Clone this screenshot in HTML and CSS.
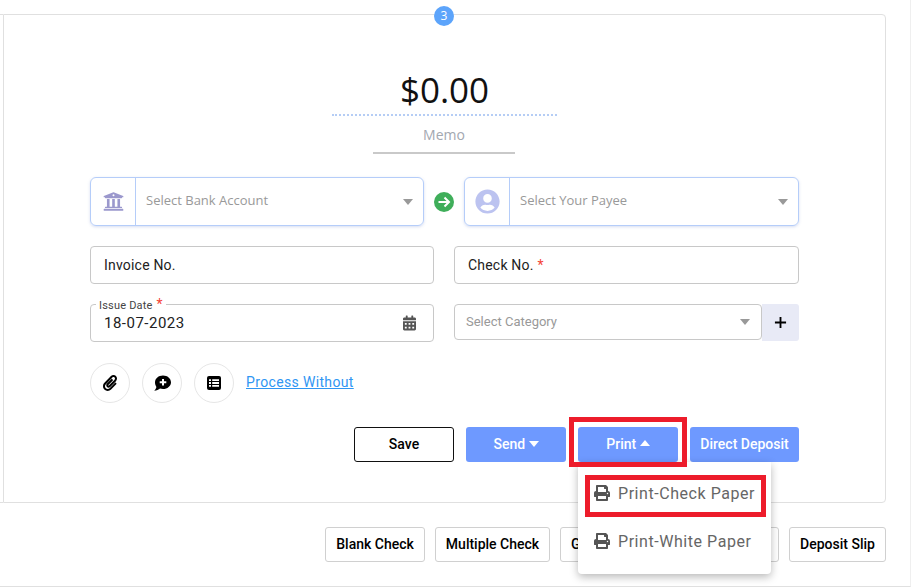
FILE: index.html
```html
<!DOCTYPE html>
<html lang="en">
<head>
  <meta charset="UTF-8" />
  <title>Write Check</title>
  <link rel="stylesheet" href="styles.css">
</head>
<body>

<div class="page">
  <div class="card">
    <span class="step">3</span>

    <div class="amount">$0.00</div>
    <div class="memo">Memo</div>

    <div class="form">
      <div class="row pick-row">
        <div class="pick">
          <span class="pick-icon">
            <svg class="i-bank" viewBox="0 0 512 512"><path d="M496 128v16a8 8 0 0 1-8 8h-24v12c0 6.627-5.373 12-12 12H60c-6.627 0-12-5.373-12-12v-12H24a8 8 0 0 1-8-8v-16a8 8 0 0 1 4.941-7.392l232-88a7.996 7.996 0 0 1 6.118 0l232 88A8 8 0 0 1 496 128zm-24 304H40c-13.255 0-24 10.745-24 24v16a8 8 0 0 0 8 8h464a8 8 0 0 0 8-8v-16c0-13.255-10.745-24-24-24zM96 192v192H60c-6.627 0-12 5.373-12 12v20h416v-20c0-6.627-5.373-12-12-12h-36V192h-64v192h-64V192h-64v192h-64V192H96z"/><circle cx="256" cy="104" r="24" fill="#fff"/></svg>
          </span>
          <span class="pick-text">Select Bank Account</span>
          <span class="caret"></span>
        </div>
        <span class="go">
          <svg viewBox="0 0 20 20"><path d="M4.500 10h10.500M10.500 5.500L15 10l-4.500 4.500" fill="none" stroke="#fff" stroke-width="2"/></svg>
        </span>
        <div class="pick">
          <span class="pick-icon">
            <svg class="i-user" viewBox="0 0 496 512"><path d="M248 8C111 8 0 119 0 256s111 248 248 248 248-111 248-248S385 8 248 8zm0 96c48.600 0 88 39.400 88 88s-39.400 88-88 88-88-39.400-88-88 39.400-88 88-88zm0 344c-58.700 0-111.300-26.600-146.500-68.200 18.800-35.400 55.600-59.800 98.500-59.800 2.400 0 4.800.4 7.100 1.100 13 4.200 26.600 6.900 40.900 6.900 14.300 0 28-2.700 40.900-6.900 2.300-.7 4.700-1.100 7.100-1.100 42.900 0 79.700 24.400 98.500 59.800C359.300 421.400 306.700 448 248 448z"/></svg>
          </span>
          <span class="pick-text">Select Your Payee</span>
          <span class="caret"></span>
        </div>
      </div>

      <div class="row two">
        <div class="field">Invoice No.</div>
        <div class="field">Check No. <span class="req">*</span></div>
      </div>

      <div class="row two">
        <div class="field date">
          <span class="legend">Issue Date <span class="req">*</span></span>
          <span>18-07-2023</span>
          <svg class="i-cal" viewBox="0 0 448 512"><path d="M0 464c0 26.500 21.500 48 48 48h352c26.500 0 48-21.500 48-48V192H0v272zm320-196c0-6.600 5.400-12 12-12h40c6.600 0 12 5.400 12 12v40c0 6.600-5.400 12-12 12h-40c-6.600 0-12-5.400-12-12v-40zm0 128c0-6.600 5.400-12 12-12h40c6.600 0 12 5.400 12 12v40c0 6.600-5.400 12-12 12h-40c-6.600 0-12-5.400-12-12v-40zM192 268c0-6.600 5.400-12 12-12h40c6.600 0 12 5.400 12 12v40c0 6.600-5.400 12-12 12h-40c-6.600 0-12-5.400-12-12v-40zm0 128c0-6.600 5.400-12 12-12h40c6.600 0 12 5.400 12 12v40c0 6.600-5.400 12-12 12h-40c-6.600 0-12-5.400-12-12v-40zM64 268c0-6.600 5.400-12 12-12h40c6.600 0 12 5.400 12 12v40c0 6.600-5.400 12-12 12H76c-6.600 0-12-5.400-12-12v-40zm0 128c0-6.600 5.400-12 12-12h40c6.600 0 12 5.400 12 12v40c0 6.600-5.400 12-12 12H76c-6.600 0-12-5.400-12-12v-40zM400 64h-48V16c0-8.800-7.200-16-16-16h-32c-8.800 0-16 7.200-16 16v48H160V16c0-8.800-7.200-16-16-16h-32c-8.800 0-16 7.200-16 16v48H48C21.500 64 0 85.500 0 112v48h448v-48c0-26.500-21.500-48-48-48z"/></svg>
        </div>
        <div class="cat-wrap">
          <div class="cat">
            <span class="cat-text">Select Category</span>
            <span class="caret"></span>
          </div>
          <span class="plus">
            <svg viewBox="0 0 14 14"><path d="M1 7h12M7 1v12" stroke="#000" stroke-width="2"/></svg>
          </span>
        </div>
      </div>

      <div class="tools">
        <span class="round">
          <svg class="i-clip" viewBox="0 0 448 512"><path d="M43.246 466.142c-58.430-60.289-57.341-157.511 1.386-217.581L254.392 34c44.316-45.332 116.351-45.336 160.671 0 43.890 44.894 43.943 117.329 0 162.276L232.214 383.128c-29.855 30.537-78.633 30.111-107.982-.998-28.275-29.970-27.368-77.473 1.452-106.953l143.743-146.835c6.182-6.314 16.312-6.422 22.626-.241l22.861 22.379c6.315 6.182 6.422 16.312.241 22.626L171.427 319.927c-4.932 5.045-5.236 13.428-.648 18.292 4.372 4.634 11.245 4.711 15.688.165l182.849-186.851c19.613-20.062 19.613-52.725-.011-72.798-19.189-19.627-49.957-19.637-69.154 0L90.390 293.295c-34.763 35.560-35.299 93.120-1.191 128.313 34.010 35.093 88.985 35.137 123.058.286l172.060-175.999c6.177-6.319 16.307-6.433 22.626-.256l22.877 22.364c6.319 6.177 6.434 16.307.256 22.626l-172.060 175.998c-59.576 60.938-155.943 60.216-214.770-.485z"/></svg>
        </span>
        <span class="round">
          <svg class="i-note" viewBox="0 0 18 16"><path d="M10 0.500c4.400 0 8 2.900 8 6.800s-3.600 6.800-8 6.800c-1.100 0-2.100-.2-3-.5C5.700 14.800 3.600 15.800 1.200 15.800c1-1 2-2.600 2.200-3.900C2.500 10.700 2 9 2 7.300 2 3.400 5.600.5 10 .5z"/><path d="M10 4v6.600M6.700 7.300h6.600" stroke="#fff" stroke-width="2"/></svg>
        </span>
        <span class="round">
          <svg class="i-list" viewBox="0 0 14 14"><rect width="14" height="14" rx="2"/><path d="M2 3.300h2v1.800H2zM2 6.100h2v1.800H2zM2 8.900h2v1.800H2zM5.200 3.300H12v1.800H5.200zM5.200 6.100H12v1.800H5.200zM5.200 8.900H12v1.800H5.200z" fill="#fff"/></svg>
        </span>
        <a class="link" href="#">Process Without</a>
      </div>

      <div class="actions">
        <button class="btn save">Save</button>
        <button class="btn blue">Send <span class="caret down"></span></button>
        <div class="print-wrap">
          <button class="btn blue">Print <span class="caret up"></span></button>
          <span class="mark mark-btn"></span>
          <div class="menu">
            <div class="menu-item">
              <svg class="i-print" viewBox="0 0 512 512"><use href="#print"/></svg>
              Print-Check Paper
            </div>
            <div class="menu-item">
              <svg class="i-print" viewBox="0 0 512 512"><use href="#print"/></svg>
              Print-White Paper
            </div>
            <span class="mark mark-item"></span>
          </div>
        </div>
        <button class="btn blue deposit">Direct Deposit</button>
      </div>
    </div>
  </div>

  <div class="foot">
    <button class="btn plain w-blank">Blank Check</button>
    <button class="btn plain w-multi">Multiple Check</button>
    <button class="btn plain w-group">G</button>
    <button class="btn plain w-slip">Deposit Slip</button>
  </div>
</div>

<svg class="defs" width="0" height="0">
  <symbol id="print" viewBox="0 0 512 512"><path d="M448 192V77.250c0-8.490-3.370-16.620-9.370-22.630L393.370 9.370c-6-6-14.140-9.370-22.630-9.370H96C78.330 0 64 14.330 64 32v160c-35.350 0-64 28.650-64 64v112c0 8.840 7.160 16 16 16h48v96c0 17.670 14.330 32 32 32h320c17.670 0 32-14.330 32-32v-96h48c8.840 0 16-7.160 16-16V256c0-35.350-28.650-64-64-64zm-64 256H128v-96h256v96zm0-224H128V64h192v48c0 8.840 7.160 16 16 16h48v96zm48 72c-13.250 0-24-10.750-24-24 0-13.260 10.750-24 24-24s24 10.740 24 24c0 13.250-10.750 24-24 24z"/></symbol>
</svg>

</body>
</html>
```

FILE: styles.css
```css
* { box-sizing: border-box; }
html, body { margin: 0; height: 100%; overflow: hidden; background: #fff; }
body { font-family: 'Roboto', sans-serif; color: #212529; }

.page { width: 911px; height: 587px; padding-top: 14px; border-right: 1px solid #efefef; border-bottom: 1px solid #e0e0e0; }
.card { position: relative; width: 883px; height: 489px; margin-left: 3px; padding-top: 56px; border: 1px solid #e0e0e0; border-left-color: #e0e0e0; border-radius: 0 4px 4px 0; }
.card::before, .card::after { content: ""; position: absolute; left: -4px; width: 3px; height: 1px; background: #e0e0e0; }
.card::before { top: -1px; }
.card::after { bottom: -1px; }
.step { position: absolute; top: -9px; left: 430px; width: 20px; height: 20px; border-radius: 50%; background: #5ca4fb; color: #fff; font-family: 'Open Sans', sans-serif; font-size: 12px; line-height: 20px; text-align: center; }

.amount { width: 225px; height: 45px; margin: 0 auto; border-bottom: 2px dotted #b5cdf5; font-family: 'Open Sans', sans-serif; font-size: 35px; font-weight: 500; line-height: 38px; color: #111; text-align: center; }
.memo { width: 142px; height: 38px; margin: 0 0 0 369px; border-bottom: 2px solid #c9c9c9; font-family: 'Open Sans', sans-serif; font-size: 14px; line-height: 38px; color: #a3a8b0; text-align: center; }

.form { width: 709px; margin: 23px auto 0; }
.row { display: flex; }
.two { display: grid; grid-template-columns: 344px 345px; gap: 20px; margin-top: 20px; }

.pick-row { align-items: center; gap: 10px; }
.pick { flex: 1 1 0; display: flex; align-items: center; height: 49px; border: 1px solid #b5cdf9; border-radius: 6px; box-shadow: 0 1px 3px rgba(90,120,200,.25); }
.pick:first-child { flex: 0 0 334px; }
.pick-icon { display: flex; align-items: center; justify-content: center; flex: none; width: 45px; height: 100%; border-right: 1px solid #b5cdf9; }
.pick-text { flex: 1; padding: 0 0 3px 10px; font-family: 'Open Sans', sans-serif; font-size: 13px; color: #999; }
.pick .caret { margin-right: 10px; }
.i-bank { width: 21px; height: 21px; fill: #9b98cd; }
.i-user { width: 25px; height: 25px; fill: #bcc3f0; }
.go { flex: none; width: 20px; height: 20px; border-radius: 50%; background: #3fae5a; }
.go svg { display: block; }

.caret { display: inline-block; width: 0; height: 0; border-left: 5px solid transparent; border-right: 5px solid transparent; border-top: 6px solid #999; }
.caret.down { border-top-color: #fff; vertical-align: 2px; }
.caret.up { border-top: 0; border-bottom: 6px solid #fff; vertical-align: 3px; }

.field { display: flex; align-items: center; height: 38px; padding: 0 13px; border: 1px solid #c8c8c8; border-radius: 4px; font-size: 14px; letter-spacing: .2px; color: #222; }
.req { color: #f44336; }
.field .req { margin-left: 4px; }
.date { position: relative; justify-content: space-between; padding-right: 17px; font-size: 15px; letter-spacing: .5px; }
.legend { position: absolute; top: -7px; left: 5px; padding: 0 3px; background: #fff; font-size: 11px; line-height: 13px; letter-spacing: .2px; color: #444; }
.legend .req { margin-left: 1px; font-size: 14px; }
.i-cal { width: 13px; height: 16px; fill: #555; }

.cat-wrap { display: flex; align-items: flex-start; }
.cat { flex: 1; display: flex; align-items: center; justify-content: space-between; height: 36px; padding: 0 11px; border: 1px solid #c8c8c8; border-radius: 4px; font-size: 13px; color: #999; }
.cat-text { padding-bottom: 2px; }
.plus { display: flex; align-items: center; justify-content: center; flex: none; width: 37px; height: 37px; background: #e8eaf6; border-radius: 0 3px 3px 0; }
.plus svg { width: 13px; height: 13px; }

.tools { display: flex; align-items: center; gap: 12px; margin-top: 21px; }
.round { display: flex; align-items: center; justify-content: center; width: 40px; height: 40px; border: 1px solid #e6e6e6; border-radius: 50%; }
.i-clip { width: 14px; height: 16px; }
.i-note { width: 18px; height: 16px; }
.i-list { width: 14px; height: 14px; }
.link { padding-bottom: 2px; color: #2f96f3; font-size: 14px; letter-spacing: .35px; }

.actions { display: flex; justify-content: flex-end; gap: 12px; margin-top: 24px; }
.btn { height: 35px; padding: 0 0 2px; border: 1px solid transparent; border-radius: 3px; background: #fff; font-family: inherit; font-size: 14px; font-weight: 500; color: #000; white-space: nowrap; }
.save { width: 100px; border-color: #111; }
.blue { width: 100px; background: #6e99ff; color: #fff; }
.deposit { width: 109px; }
.print-wrap { position: relative; }

.menu { position: absolute; z-index: 2; top: 35px; left: 0; width: 193px; height: 112px; padding-top: 7px; background: #fff; border-radius: 0 0 4px 4px; box-shadow: 0 3px 8px rgba(0,0,0,.28); }
.menu-item { display: flex; align-items: center; gap: 8px; height: 48px; padding-left: 16px; font-size: 16px; letter-spacing: .55px; color: #666; }
.i-print { width: 16px; height: 16px; fill: #555; }
.defs { position: absolute; }

.mark { position: absolute; z-index: 3; border: 5px solid #ed1c2b; pointer-events: none; }
.mark-btn { top: -10px; left: -9px; width: 118px; height: 50px; }
.mark-item { top: 13px; left: 7px; width: 181px; height: 42px; }

.foot { display: flex; justify-content: flex-end; gap: 10px; width: 886px; margin-top: 24px; }
.plain { border-color: #d0d0d0; }
.w-blank { width: 100px; }
.w-multi { width: 115px; }
.w-group { width: 219px; padding-left: 10px; text-align: left; }
.w-slip { width: 97px; }
```
